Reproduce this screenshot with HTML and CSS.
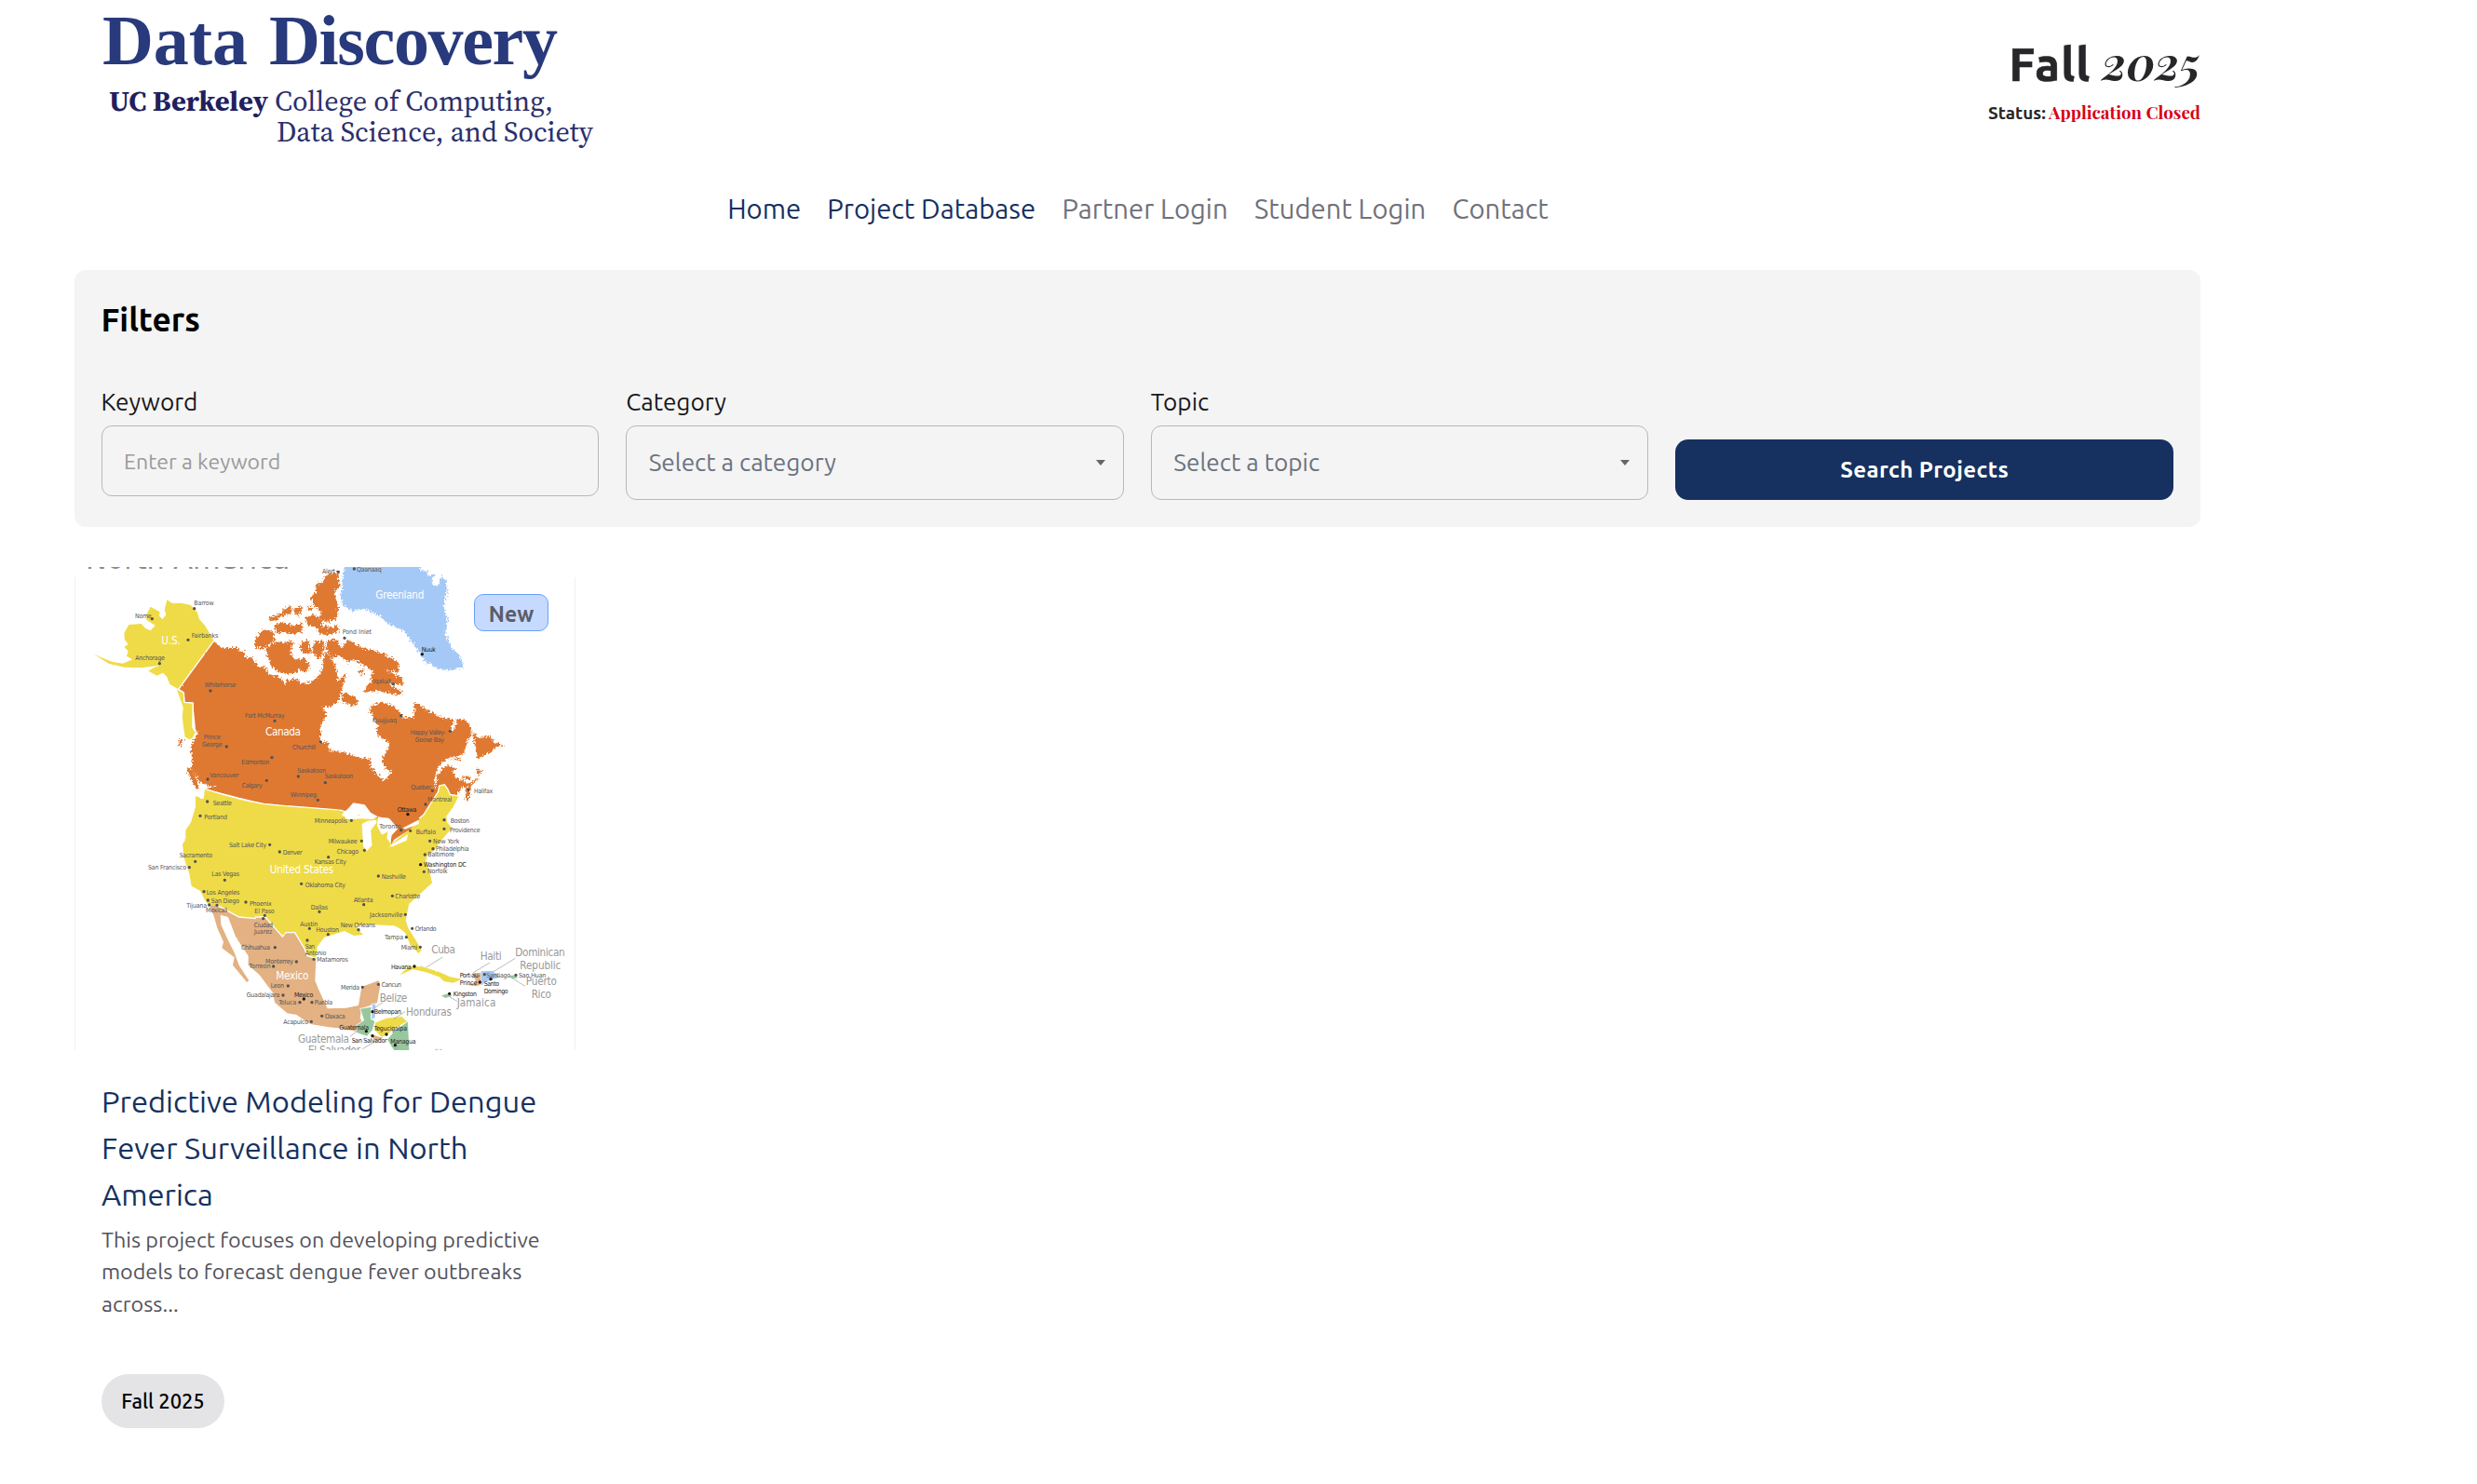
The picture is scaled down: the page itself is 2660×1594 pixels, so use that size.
FILE: index.html
```html
<!DOCTYPE html>
<html lang="en">
<head>
<meta charset="utf-8">
<title>Data Discovery - Project Database</title>
<link rel="stylesheet" href="styles.css">
</head>
<body>
<div class="page">
  <header class="top">
    <svg class="logo" width="570" height="170" viewBox="0 0 570 170" role="img" aria-label="Data Discovery">
      <text class="logo-name" x="30" y="69" textLength="156">Data</text>
      <text class="logo-name" x="209" y="69" textLength="310">Discovery</text>
      <text class="logo-sub logo-bold" x="37" y="119" textLength="171" lengthAdjust="spacingAndGlyphs">UC Berkeley</text>
      <text class="logo-sub" x="215" y="119" textLength="299" lengthAdjust="spacingAndGlyphs">College of Computing,</text>
      <text class="logo-sub" x="217" y="152" textLength="340" lengthAdjust="spacingAndGlyphs">Data Science, and Society</text>
    </svg>
    <div class="term">
      <div class="term-name"><span class="term-season">Fall</span> <span class="term-year">2025</span></div>
      <div class="term-status"><span class="status-label">Status:</span><span class="status-value">Application Closed</span></div>
    </div>
  </header>
  <nav class="nav">
    <a class="active">Home</a><a class="active">Project Database</a><a>Partner Login</a><a>Student Login</a><a>Contact</a>
  </nav>
  <section class="filters">
    <h2>Filters</h2>
    <div class="filter-row">
      <div class="field"><label>Keyword</label><div class="box input"><span>Enter a keyword</span></div></div>
      <div class="field"><label>Category</label><div class="box select"><span>Select a category</span><i class="caret"></i></div></div>
      <div class="field"><label>Topic</label><div class="box select"><span>Select a topic</span><i class="caret"></i></div></div>
      <button class="search">Search Projects</button>
    </div>
  </section>
  <article class="card">
    <div class="cover">
      <svg class="map" width="538" height="519" viewBox="30 27 1614 1557">
        <defs>
          <filter id="coast" x="-5%" y="-5%" width="110%" height="110%"><feTurbulence type="fractalNoise" baseFrequency="0.16" numOctaves="2" seed="4"/><feDisplacementMap in="SourceGraphic" scale="24" xChannelSelector="R" yChannelSelector="G"/></filter>
          <filter id="shore" x="-5%" y="-5%" width="110%" height="110%"><feTurbulence type="fractalNoise" baseFrequency="0.12" numOctaves="2" seed="9"/><feDisplacementMap in="SourceGraphic" scale="5" xChannelSelector="R" yChannelSelector="G"/></filter>
        </defs>
        <text class="map-title" x="66" y="34" textLength="658" lengthAdjust="spacingAndGlyphs">North America</text>
        <g filter="url(#coast)">
          <path class="ice" d="M900 10H1135L1150 42 1172 36 1165 58 1190 52 1180 78 1200 92 1212 60 1226 65 1230 110 1218 150 1232 192 1225 240 1245 290 1270 310 1284 350 1240 360 1205 354 1160 332 1132 290 1112 262 1090 232 1045 212 1010 182 960 160 925 170 895 150 888 130Z"/>
          <g class="canada">
            <path d="M880 42L884 90 866 110 880 150 876 192 850 205 820 195 824 170 800 150 790 125 808 108 805 85 830 75 842 52Z"/>
            <path d="M812 215L860 222 880 212 878 238 840 246 815 240Z"/>
            <path d="M608 270L635 228 672 235 677 262 640 290 614 288Z"/>
            <path d="M645 290L680 268 712 272 722 262 735 275 725 300 738 320 754 335 755 362 720 374 690 366 662 345Z"/>
            <path d="M655 190L690 180 710 160 727 150 730 175 705 182 680 198 660 202Z"/>
            <path d="M672 215L700 205 735 215 760 210 768 235 730 245 705 236 680 238Z"/>
            <path d="M735 165L755 150 765 165 750 185ZM770 190L800 180 830 200 820 228 785 215ZM778 155L800 160 790 170Z"/>
            <path d="M760 270L785 262 792 310 770 305 755 290ZM800 270L834 262 832 300 820 325 795 305Z"/>
            <path d="M738 330L770 318 790 345 775 368 755 355Z"/>
            <path d="M840 290L846 264 872 258 890 290 910 260 950 285 980 293 1022 304 1075 335 1075 366 1032 360 1082 382 1090 408 1040 402 1085 428 1080 440 1000 425 964 432 985 392 990 360 930 325 910 332 890 318 875 312 860 322Z"/>
            <path d="M948 360L962 355 963 372 950 375ZM890 432L925 440 945 462 930 476 890 460Z"/>
            <path d="M510 288L560 288 557 302 515 304Z"/>
            <path d="M479 267L515 300 540 296 575 300 580 320 600 318 620 345 645 352 655 372 680 378 700 390 705 408 712 395 740 385 760 402 790 400 810 385 825 365 838 300 850 310 872 345 880 395 905 370 890 430 880 460 855 478 826 476 842 500 822 540 822 590 845 592 852 618 900 625 950 643 982 645 985 670 1000 690 1025 715 1040 705 1050 685 1030 675 1020 645 1040 610 1045 595 1010 570 1000 552 1010 540 990 510 980 478 1020 462 1060 475 1090 512 1125 510 1124 462 1170 490 1220 515 1253 520 1242 552 1252 556 1264 515 1290 520 1307 540 1310 565 1295 590 1285 630 1230 645 1205 665 1190 710 1192 748 1198 700 1215 675 1240 668 1257 675 1248 690 1260 705 1300 725 1275 740 1262 765 1235 770 1180 800 1050 860 900 800 700 765 470 735 432 720 408 680 407 600 427 562 418 465 390 463 388 432 371 421Z"/>
            <path d="M1312 555L1330 576 1370 572 1380 590 1412 600 1385 608 1375 622 1330 646 1322 610Z"/>
            <path d="M1335 708L1310 730 1300 777 1285 770 1295 740 1282 732ZM1240 648L1275 641 1272 650ZM1274 703L1308 704 1300 714ZM1325 676L1342 685 1332 702Z"/>
            <path d="M390 672L410 680 432 735 425 743 404 712ZM366 582L380 585 370 608Z"/>
          </g>
        </g>
        <g filter="url(#shore)">
          <path class="us" d="M90 306L115 318 150 332 185 338 217 325 198 315 203 298 190 285 203 276 192 262 190 240 205 213 245 210 258 224 275 232 290 215 262 198 262 180 275 155 305 172 303 185 314 195 325 180 320 165 328 133 345 144 375 143 404 150 425 170 432 195 450 215 465 240 479 265 365 421 337 405 328 382 315 368 295 377 268 362 285 352 306 344 245 352 190 350 140 338Z"/>
          <path class="canada" d="M479 267L520 302 520 500 421 560 412 465 384 463 382 432 365 421Z"/>
          <path class="us line" d="M358 420L382 432 384 463 412 465 411 545 421 560 410 580 400 584 385 575 380 545 376 510 379 480Z"/>
          <path class="canada" d="M450 742L640 700 1190 740 1240 760 1155 825 1115 870 1060 905 1050 922 1050 890 1072 870 900 812 760 800 640 790Z"/>
          <path class="us" d="M450 742C520 765 580 780 640 790 720 800 800 801 895 812L905 840 1040 835 1050 920 1115 868 1155 825 1202 750 1205 732 1222 728 1232 742 1240 760 1268 765 1250 800 1228 830 1230 850 1246 868 1210 910 1190 940 1164 960 1172 1000 1182 1045 1150 1075 1108 1112 1097 1165 1105 1190 1130 1230 1148 1262 1138 1272 1112 1245 1095 1205 1078 1192 1060 1183 990 1180 935 1182 960 1212 930 1215 900 1200 870 1210 835 1220 812 1250 808 1288 780 1280 770 1255 740 1205 712 1205 700 1218 675 1190 645 1155 615 1155 612 1160 560 1155 490 1117 462 1115 450 1100 435 1070 407 1055 400 1015 383 965 378 920 388 905 388 875 405 850 420 800 420 765 446 775Z"/>
          <path class="water" d="M890 826L915 802 928 787 965 793 984 818 1008 832 990 840 960 838 945 826 925 838 900 832ZM956 855L975 845 1000 842 1004 850 985 875 988 925 972 942 960 928ZM1008 832L1045 838 1072 870 1052 892 1048 918 1036 900 1040 880 1020 890 1005 862ZM1042 928L1105 888 1100 908 1055 928ZM1088 868L1138 842 1140 855 1095 872Z"/>
          <path class="water" d="M1160 965L1176 985 1180 1010 1168 995Z"/>
          <path class="border" d="M479 265L365 421 382 432 384 463 412 465 411 545 421 560M450 742C520 765 580 780 640 790 720 800 800 801 895 812M1140 838L1155 825 1202 750 1205 732 1222 728 1232 742 1240 760 1268 765"/>
          <path class="mexico" d="M465 1117L490 1117 560 1155 612 1160 615 1155 645 1155 675 1190 700 1218 712 1205 740 1205 770 1255 780 1280 808 1288 805 1360 815 1385 845 1450 905 1448 945 1440 955 1380 1010 1360 1015 1375 1005 1432 955 1450 950 1480 960 1500 940 1525 900 1515 850 1510 790 1500 745 1470 715 1465 675 1430 670 1400 625 1340 590 1310 590 1280 550 1220 525 1155 500 1148 502 1180 525 1230 545 1270 560 1310 592 1360 585 1365 540 1310 545 1285 505 1255 510 1235 490 1190 480 1155Z"/>
          <path class="border" d="M490 1117L560 1155 612 1160 615 1155 645 1155 675 1190 700 1218 712 1205 740 1205 770 1255 780 1280 808 1288"/>
          <path class="green line" d="M950 1450L987 1444 985 1480 998 1492 990 1520 972 1540 938 1528 940 1502 962 1488Z"/>
          <path class="ice line" d="M988 1435L1001 1434 999 1480 986 1486Z"/>
          <path class="us line" d="M998 1495L1035 1480 1085 1475 1103 1492 1070 1510 1035 1537 1018 1542 995 1518Z"/>
          <path class="mexico line" d="M980 1530L1018 1542 1020 1550 995 1552Z"/>
          <path class="green line" d="M1105 1490L1110 1600 1068 1600 1037 1550 1060 1522Z"/>
          <path class="us" d="M1078 1342L1108 1314 1150 1315 1205 1332 1240 1348 1278 1355 1250 1367 1220 1362 1205 1348 1160 1332 1120 1324Z"/>
          <path class="mexico" d="M1312 1336L1339 1334 1340 1372 1325 1378 1294 1374 1325 1366Z"/>
          <path class="ice" d="M1340 1330L1375 1328 1402 1348 1378 1356 1352 1364 1342 1376Z"/>
          <path class="green" d="M1212 1408L1240 1400 1246 1410 1225 1416ZM1428 1345L1455 1341 1456 1352 1438 1353Z"/>
        </g>
        <path class="leader" d="M1162 1318L1216 1284M1315 1334L1368 1302M1378 1332L1450 1288M1440 1352L1482 1378M1238 1412L1262 1426M996 1448L1024 1430M1058 1484L1095 1460M918 1540L950 1515M958 1580L1022 1542M1062 1584L1075 1570M1192 1582H1202M1207 1582H1214"/>
        <g class="city">
          <text x="415" y="149" textLength="64">Barrow</text><text x="225" y="192" textLength="53">Nome</text><text x="407" y="254" textLength="86">Fairbanks</text><text x="226" y="327" textLength="95">Anchorage</text>
          <text x="828" y="49" textLength="42">Alert</text><text x="939" y="41" textLength="80">Qaanaaq</text><text x="893" y="244" textLength="94">Pond Inlet</text><text x="992" y="401" textLength="58">Iqaluit</text><text x="990" y="529" textLength="78">Kuujjuaq</text>
          <text x="1112" y="567" textLength="115">Happy Valley-</text><text x="1127" y="591" textLength="94">Goose Bay</text>
          <text x="449" y="414" textLength="101">Whitehorse</text><text x="579" y="512" textLength="128">Fort McMurray</text><text x="446" y="583" textLength="55">Prince</text><text x="441" y="607" textLength="65">George</text>
          <text x="732" y="614" textLength="75">Churchill</text><text x="568" y="664" textLength="90">Edmonton</text><text x="748" y="689" textLength="92">Saskatoon</text><text x="836" y="709" textLength="92">Saskatoon</text><text x="466" y="704" textLength="93">Vancouver</text><text x="569" y="738" textLength="66">Calgary</text><text x="726" y="768" textLength="84">Winnipeg</text><text x="476" y="794" textLength="61">Seattle</text>
          <text x="1114" y="743" textLength="67">Quebec</text><text x="1167" y="784" textLength="79">Montreal</text><text x="1317" y="756" textLength="61">Halifax</text>
          <text x="448" y="839" textLength="74">Portland</text><text x="528" y="931" textLength="121">Salt Lake City</text><text x="701" y="953" textLength="63">Denver</text><text x="368" y="962" textLength="106">Sacramento</text><text x="267" y="1003" textLength="123">San Francisco</text><text x="472" y="1023" textLength="89">Las Vegas</text><text x="455" y="1082" textLength="107">Los Angeles</text><text x="470" y="1110" textLength="91">San Diego</text><text x="391" y="1124" textLength="65">Tijuana</text><text x="453" y="1141" textLength="70">Mexicali</text><text x="594" y="1118" textLength="71">Phoenix</text><text x="610" y="1143" textLength="64">El Paso</text><text x="608" y="1187" textLength="61">Ciudad</text><text x="609" y="1210" textLength="58">Juarez</text>
          <text x="567" y="1260" textLength="93">Chihuahua</text><text x="645" y="1306" textLength="90">Monterrey</text><text x="592" y="1321" textLength="70">Torreon</text><text x="662" y="1384" textLength="43">Leon</text><text x="584" y="1414" textLength="107">Guadalajara</text><text x="688" y="1437" textLength="57">Toluca</text><text x="803" y="1437" textLength="58">Puebla</text><text x="703" y="1500" textLength="80">Acapulco</text><text x="836" y="1482" textLength="66">Oaxaca</text>
          <text x="803" y="851" textLength="106">Minneapolis</text><text x="848" y="917" textLength="93">Milwaukee</text><text x="875" y="950" textLength="70">Chicago</text><text x="803" y="985" textLength="103">Kansas City</text><text x="773" y="1060" textLength="130">Oklahoma City</text><text x="791" y="1130" textLength="55">Dallas</text><text x="757" y="1185" textLength="57">Austin</text><text x="808" y="1204" textLength="74">Houston</text><text x="773" y="1256" textLength="31">San</text><text x="773" y="1278" textLength="68">Antonio</text><text x="811" y="1299" textLength="100">Matamoros</text>
          <text x="1012" y="869" textLength="70">Toronto</text><text x="1130" y="887" textLength="64">Buffalo</text><text x="1241" y="852" textLength="61">Boston</text><text x="1239" y="881" textLength="98">Providence</text><text x="1185" y="917" textLength="85">New York</text><text x="1194" y="942" textLength="107">Philadelphia</text><text x="1168" y="961" textLength="86">Baltimore</text><text x="1167" y="1015" textLength="65">Norfolk</text><text x="1019" y="1032" textLength="79">Nashville</text><text x="1063" y="1096" textLength="81">Charlotte</text><text x="929" y="1108" textLength="63">Atlanta</text><text x="981" y="1154" textLength="106">Jacksonville</text><text x="887" y="1188" textLength="112">New Orleans</text><text x="1127" y="1200" textLength="69">Orlando</text><text x="1029" y="1227" textLength="60">Tampa</text><text x="1082" y="1259" textLength="53">Miami</text><text x="888" y="1388" textLength="60">Merida</text><text x="1019" y="1380" textLength="64">Cancun</text><text x="1357" y="1350" textLength="77">Santiago</text><text x="1461" y="1350" textLength="88">San Huan</text>
        </g>
        <g class="city capital">
          <text x="1148" y="299" textLength="46">Nuuk</text><text x="1070" y="815" textLength="62">Ottawa</text><text x="1155" y="992" textLength="138">Washington DC</text><text x="1050" y="1322" textLength="65">Havana</text><text x="1271" y="1349" textLength="66">Port-au-</text><text x="1271" y="1373" textLength="56">Prince</text><text x="1349" y="1377" textLength="49">Santo</text><text x="1349" y="1401" textLength="78">Domingo</text><text x="1250" y="1409" textLength="76">Kingston</text><text x="738" y="1412" textLength="61">Mexico</text><text x="995" y="1466" textLength="88">Belmopan</text><text x="883" y="1518" textLength="95">Guatemala</text><text x="995" y="1522" textLength="106">Tegucigalpa</text><text x="923" y="1560" textLength="114">San Salvador</text><text x="1048" y="1562" textLength="82">Managua</text>
        </g>
        <path class="dots" d="M416 161h0M280 194h0M396 262h0M304 338h0M468 426h0M675 523h0M520 606h0M823 591h0M666 641h0M751 702h0M838 722h0M649 715h0M459 711h0M814 778h0M458 783h0M880 43h0M931 33h0M900 256h0M1057 404h0M1082 506h0M1240 556h0M1183 748h0M1161 792h0M1298 745h0M435 829h0M659 922h0M691 945h0M419 976h0M400 995h0M514 1036h0M447 1073h0M460 1101h0M464 1116h0M489 1117h0M582 1107h0M643 1150h0M638 1160h0M761 1048h0M819 1138h0M787 1192h0M780 1230h0M801 1291h0M676 1253h0M745 1299h0M671 1314h0M718 1377h0M702 1407h0M756 1430h0M795 1430h0M827 1474h0M793 1492h0M922 844h0M955 910h0M964 940h0M848 962h0M1009 1023h0M1054 1087h0M962 1115h0M1096 1147h0M945 1196h0M847 1211h0M1118 1192h0M1099 1220h0M1144 1252h0M1221 842h0M1221 871h0M1175 910h0M1185 935h0M1159 954h0M1156 1009h0M1082 875h0M1112 877h0M958 1381h0M1009 1372h0M1351 1340h0M1452 1342h0"/>
        <path class="dots dark" d="M1150 308h0M1104 824h0M1145 986h0M1125 1314h0M1336 1365h0M1371 1355h0M1238 1402h0M769 1419h0M990 1460h0M970 1523h0M1035 1533h0M990 1538h0M1063 1568h0"/>
        <g class="country">
          <text x="310" y="276" textLength="61">U.S.</text><text x="645" y="571" textLength="114">Canada</text><text x="1000" y="129" textLength="156">Greenland</text><text x="659" y="1014" textLength="206">United States</text><text x="679" y="1357" textLength="105">Mexico</text>
        </g>
        <g class="country grey">
          <text x="1180" y="1271" textLength="77">Cuba</text><text x="1337" y="1293" textLength="69">Haiti</text><text x="1450" y="1282" textLength="160">Dominican</text><text x="1465" y="1322" textLength="132">Republic</text><text x="1484" y="1375" textLength="100">Puerto</text><text x="1502" y="1416" textLength="64">Rico</text><text x="1262" y="1442" textLength="125">Jamaica</text><text x="1013" y="1427" textLength="89">Belize</text><text x="1098" y="1474" textLength="147">Honduras</text><text x="750" y="1560" textLength="165">Guatemala</text><text x="783" y="1596" textLength="168">El Salvador</text>
        </g>
      </svg>
      <span class="badge">New</span>
    </div>
    <div class="body">
      <h3>Predictive Modeling for Dengue Fever Surveillance in North America</h3>
      <p>This project focuses on developing predictive models to forecast dengue fever outbreaks across...</p>
      <span class="pill">Fall 2025</span>
    </div>
  </article>
</div>
</body>
</html>
```
FILE: styles.css
```css
* { box-sizing: border-box; }
body { margin: 0; background: #fff; font-family: "Ubuntu", "Noto Sans", sans-serif; color: #000; }
span { white-space: nowrap; }
.page { width: 2283px; margin-left: 80px; display: flex; flex-direction: column; }

.top { height: 200px; display: flex; justify-content: space-between; align-items: flex-start; }
.logo { flex: none; }
.logo-name { font: bold 76px "Liberation Serif", serif; fill: #283a7c; }
.logo-sub { font: 30.5px "Source Serif 4", "Source Serif Pro", "Noto Serif", "Liberation Serif", serif; fill: #2b2f6c; }
.logo-bold { font-weight: bold; fill: #1e2060; }
.term { display: flex; flex-direction: column; align-items: flex-end; padding-top: 38px; color: #27272a; }
.term-name { height: 58px; font-size: 49.4px; line-height: 58px; font-weight: 700; white-space: nowrap; }
.term-season { letter-spacing: 1.2px; -webkit-text-stroke: 0.7px #27272a; }
.term-year { font-family: "Playfair Display", "Liberation Serif", serif; font-style: italic; }
.term-status { display: flex; gap: 3px; margin-top: 12px; line-height: 26px; font-size: 19px; }
.status-label { font-weight: 600; }
.status-value { font-family: "Playfair Display", "Liberation Serif", serif; font-weight: bold; font-size: 18.7px; color: #d60019; }

.nav { height: 90px; display: flex; justify-content: center; gap: 28.3px; padding-left: 1px; line-height: 50px; font-size: 29.25px; color: #71717a; }
.nav .active { color: #15305f; }

.filters { height: 276px; padding: 30px 29px 0 28.5px; border-radius: 12px; background: #f4f4f4; }
.filters h2 { margin: 0; font-size: 35.3px; line-height: 46px; font-weight: 600; }
.filter-row { display: grid; grid-template-columns: repeat(4, 1fr); gap: 29px; height: 127px; margin-top: 44px; align-items: start; }
.field label { display: block; height: 47px; line-height: 43px; font-size: 26.2px; color: #18181b; }
.box { display: flex; align-items: center; justify-content: space-between; padding: 0 19px 0 23.5px; border: 1px solid #b8b8b8; border-radius: 11px; }
.input { height: 76px; font-size: 23.1px; color: #9a9a9a; }
.select { height: 80px; padding-bottom: 1px; font-size: 26.2px; color: #6b7280; }
.caret { width: 0; height: 0; border: 5.5px solid transparent; border-top: 6px solid #666; border-bottom: 0; }
.search { align-self: end; height: 65px; padding: 0; border: 0; border-radius: 14px; background: #16315f; color: #fff; font: 700 24px "Ubuntu", "Noto Sans", sans-serif; letter-spacing: 0.4px; }

.card { width: 538px; margin-top: 43px; }
.cover { position: relative; height: 519px; }
.cover::before { content: ""; position: absolute; inset: 11px 0 0; border: solid #f1f1f1; border-width: 0 1px; }
.map { display: block; position: relative; }
.map-title { font: 95px "DejaVu Sans", sans-serif; fill: #8a8a8a; }
.canada { fill: #df7931; }
.us { fill: #efdb47; }
.ice { fill: #a5c9f6; }
.mexico { fill: #e3b182; }
.green { fill: #97c79d; }
.water { fill: #fff; }
.line { stroke: #fff; stroke-width: 2.5; }
.border { fill: none; stroke: #fff; stroke-width: 4; }
.leader { fill: none; stroke: #999; stroke-width: 2; }
.city text { font: 21px "DejaVu Sans Condensed", "DejaVu Sans", sans-serif; fill: #55565a; }
.capital text { fill: #222; }
.dots { fill: none; stroke: #505256; stroke-width: 10; stroke-linecap: round; }
.dark { stroke: #151515; }
.country text { font: 35px "DejaVu Sans Condensed", "DejaVu Sans", sans-serif; fill: #fff; }
.country.grey text { fill: #999; }
.badge { position: absolute; top: 29px; right: 29px; width: 80px; height: 40px; border: 1px solid #6ba1f8; border-radius: 10px; background: #c6daff; color: #5b5d68; font-size: 23px; font-weight: 700; line-height: 41px; text-align: center; }
.body { padding: 30px 29px 0 29px; }
.body h3 { margin: 0; font-size: 32.7px; line-height: 50px; font-weight: 400; color: #16315f; }
.body p { margin: 6px 0 0; font-size: 23.3px; line-height: 34.4px; color: #52525b; }
.pill { display: flex; justify-content: center; width: 132px; height: 58px; margin-top: 59px; border-radius: 29px; background: #e4e4e7; font-size: 21.9px; line-height: 58px; font-weight: 500; }
```
